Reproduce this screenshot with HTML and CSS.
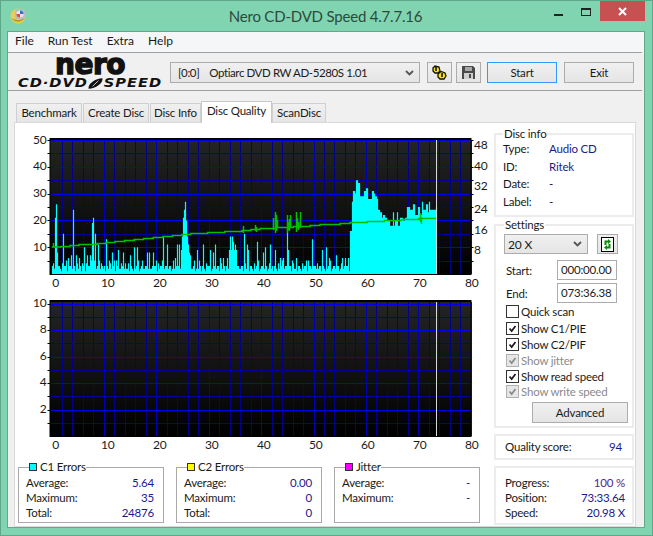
FILE: index.html
```html
<!DOCTYPE html>
<html lang="en">
<head>
    <meta charset="UTF-8">
    <title>Nero CD-DVD Speed 4.7.7.16</title>
    <link rel="stylesheet" href="styles.css">
</head>
<body>
    <svg class="defs" width="0" height="0">
        <symbol id="tick" viewBox="0 0 13 13">
            <path d="M3 6.5 L5.5 9.5 L10 3.5" fill="none" stroke="currentColor" stroke-width="2"/>
        </symbol>
    </svg>

    <div class="titlebar">
        <svg class="app-icon" width="17" height="17" viewBox="0 0 17 17">
            <circle cx="8" cy="9" r="7.5" fill="#e6cf5a"/>
            <path d="M1.5 11 A7.5 7.5 0 0 0 14.5 11 A10 8 0 0 1 1.5 11 Z" fill="#b8982c"/>
            <rect x="5" y="2" width="10" height="10" rx="2" fill="#b9bcc4"/>
            <circle cx="10" cy="7" r="3.6" fill="#e8e8ee"/>
            <path d="M10 3.4 A3.6 3.6 0 0 1 13.6 7 L10 7 Z" fill="#3a6fc0"/>
            <path d="M6.4 7 A3.6 3.6 0 0 0 10 10.6 L10 7 Z" fill="#d8503a"/>
        </svg>
        <div class="title">Nero CD-DVD Speed 4.7.7.16</div>
        <div class="win-btns">
            <span class="win-min"></span>
            <span class="win-max"></span>
            <span class="win-close">
                <svg width="9" height="9" viewBox="0 0 9 9"><path d="M1 1 L8 8 M8 1 L1 8" stroke="#fff" stroke-width="2"/></svg>
            </span>
        </div>
    </div>

    <div class="window">
        <ul class="menu">
            <li>File</li>
            <li>Run Test</li>
            <li>Extra</li>
            <li>Help</li>
        </ul>

        <div class="toolbar">
            <div class="logo">
                <div class="logo-nero">nero</div>
                <div class="logo-sub">
                    <span>CD·DVD</span>
                    <svg width="16" height="15" viewBox="0 0 16 15">
                        <path d="M1 14 C0 8 8 1 15 1 C16 7 8 14 1 14 Z" fill="#111"/>
                        <path d="M5 11 L11 4" stroke="#ddd" stroke-width="1"/>
                    </svg>
                    <span>SPEED</span>
                </div>
            </div>
            <div class="select drive-select">
                <span><span class="drive-id">[0:0]</span>Optiarc DVD RW AD-5280S 1.01</span>
                <svg class="caret" width="9" height="6" viewBox="0 0 9 6"><path d="M1 1 L4.5 4.5 L8 1" fill="none" stroke="#555" stroke-width="1.8"/></svg>
            </div>
            <button class="btn icon-btn eject-btn">
                <svg width="15" height="15" viewBox="0 0 15 15">
                    <g fill="#ffe600" stroke="#111" stroke-width="1.3">
                        <path d="M1 3 L3 1 L7 2 L8 6 L6 8 L3 8 L1 6 Z"/>
                        <path d="M6 9 L9 6.5 L13 8 L14 11 L12 14 L8 14 L6 12 Z"/>
                    </g>
                    <path d="M4 2 V6 M10 8 V12" stroke="#111" stroke-width="1.6"/>
                </svg>
            </button>
            <button class="btn icon-btn save-btn">
                <svg width="13" height="13" viewBox="0 0 13 13">
                    <path d="M0 0 H11 L13 2 V13 H0 Z" fill="#4a4a4a"/>
                    <rect x="3" y="1" width="7" height="4" fill="#a8a8a8"/>
                    <rect x="2" y="7" width="9" height="6" fill="#cfcfcf"/>
                    <rect x="7" y="8" width="2" height="4" fill="#4a4a4a"/>
                </svg>
            </button>
            <button class="btn start-btn">Start</button>
            <button class="btn exit-btn">Exit</button>
        </div>

        <div class="tabs">
            <div class="tab tab-bench">Benchmark</div>
            <div class="tab tab-create">Create Disc</div>
            <div class="tab tab-info">Disc Info</div>
            <div class="tab tab-quality active">Disc Quality</div>
            <div class="tab tab-scan">ScanDisc</div>
        </div>

        <div class="pane">
            <div class="main-col">
                <svg id="chartTop" class="chart chart-top" width="478" height="170"></svg>
                <svg id="chartBottom" class="chart chart-bottom" width="478" height="160"></svg>

                <div class="stats">
                    <fieldset class="group stat-box">
                        <legend><i class="swatch swatch-c1"></i>C1 Errors</legend>
                        <div class="row"><span>Average:</span><b>5.64</b></div>
                        <div class="row"><span>Maximum:</span><b>35</b></div>
                        <div class="row"><span>Total:</span><b>24876</b></div>
                    </fieldset>
                    <fieldset class="group stat-box">
                        <legend><i class="swatch swatch-c2"></i>C2 Errors</legend>
                        <div class="row"><span>Average:</span><b>0.00</b></div>
                        <div class="row"><span>Maximum:</span><b>0</b></div>
                        <div class="row"><span>Total:</span><b>0</b></div>
                    </fieldset>
                    <fieldset class="group stat-box">
                        <legend><i class="swatch swatch-jit"></i>Jitter</legend>
                        <div class="row"><span>Average:</span><b>-</b></div>
                        <div class="row"><span>Maximum:</span><b>-</b></div>
                    </fieldset>
                </div>
            </div>

            <div class="side-col">
                <fieldset class="panel disc-info">
                    <legend>Disc info</legend>
                    <div class="info-row"><span>Type:</span><b>Audio CD</b></div>
                    <div class="info-row"><span>ID:</span><b>Ritek</b></div>
                    <div class="info-row"><span>Date:</span><b class="plain">-</b></div>
                    <div class="info-row"><span>Label:</span><b class="plain">-</b></div>
                </fieldset>

                <fieldset class="panel settings">
                    <legend>Settings</legend>
                    <div class="speed-row">
                        <div class="select speed-select">
                            <span>20 X</span>
                            <svg class="caret" width="9" height="6" viewBox="0 0 9 6"><path d="M1 1 L4.5 4.5 L8 1" fill="none" stroke="#555" stroke-width="1.8"/></svg>
                        </div>
                        <button class="btn refresh-btn">
                            <svg width="13" height="15" viewBox="0 0 13 15">
                                <rect x="0.5" y="0.5" width="12" height="14" fill="#fff" stroke="#000"/>
                                <path d="M7 2 L10 4.5 L7 7 V5.5 H5.5 V8 H3.5 V3.5 H7 Z" fill="#0a8a0a"/>
                                <path d="M6 13 L3 10.5 L6 8 V9.5 H7.5 V7 H9.5 V11.5 H6 Z" fill="#0a8a0a"/>
                            </svg>
                        </button>
                    </div>
                    <div class="time-row"><label>Start:</label><span class="time-input">000:00.00</span></div>
                    <div class="time-row"><label>End:</label><span class="time-input">073:36.38</span></div>
                    <div class="check quick"><i class="box"></i>Quick scan</div>
                    <div class="check"><i class="box"><svg><use href="#tick"/></svg></i>Show C1/PIE</div>
                    <div class="check"><i class="box"><svg><use href="#tick"/></svg></i>Show C2/PIF</div>
                    <div class="check off"><i class="box"><svg><use href="#tick"/></svg></i>Show jitter</div>
                    <div class="check"><i class="box"><svg><use href="#tick"/></svg></i>Show read speed</div>
                    <div class="check off"><i class="box"><svg><use href="#tick"/></svg></i>Show write speed</div>
                    <button class="btn advanced-btn">Advanced</button>
                </fieldset>

                <div class="panel quality">
                    <span>Quality score:</span><b>94</b>
                </div>

                <div class="panel progress">
                    <div class="row"><span>Progress:</span><b class="purple">100 %</b></div>
                    <div class="row"><span>Position:</span><b>73:33.64</b></div>
                    <div class="row"><span>Speed:</span><b>20.98 X</b></div>
                </div>
            </div>
        </div>
    </div>

    <script src="chart.js"></script>
</body>
</html>
```

FILE: styles.css
```css
* {
    box-sizing: border-box;
}
html, body {
    margin: 0;
    padding: 0;
}
body {
    width: 653px;
    height: 536px;
    overflow: hidden;
    background: #80d4b0;
    border: 1px solid #5fa78a;
    font-family: Lato, "Liberation Sans", sans-serif;
    font-size: 11.5px;
    letter-spacing: -0.2px;
    color: #1a1a1a;
}
.defs {
    position: absolute;
}

/* title bar */
.titlebar {
    height: 30px;
    display: flex;
    align-items: flex-start;
    padding-left: 9px;
}
.app-icon {
    margin-top: 6px;
}
.title {
    flex: 1;
    text-align: center;
    font-size: 15px;
    line-height: 30px;
    color: #2c4a40;
    padding-left: 70px;
}
.win-btns {
    display: flex;
    align-items: flex-start;
}
.win-min {
    width: 9px;
    height: 2px;
    background: #222;
    margin: 13px 18px 0 0;
}
.win-max {
    width: 10px;
    height: 8px;
    border: 1px solid #222;
    border-top-width: 2px;
    margin: 7px 9px 0 0;
}
.win-close {
    width: 45px;
    height: 20px;
    background: #c75050;
    display: flex;
    align-items: center;
    justify-content: center;
    margin-right: 7px;
}

/* window body */
.window {
    margin-left: 6px;
    width: 638px;
    height: 497px;
    background: #f0f0f0;
    border: 1px solid #64a88c;
}
.menu {
    list-style: none;
    margin: 0;
    padding: 0 0 0 7px;
    height: 20px;
    background: #f5f6f7;
    display: flex;
    gap: 14px;
    line-height: 18px;
    font-size: 12px;
    letter-spacing: 0;
}
.toolbar {
    height: 39px;
    display: flex;
    align-items: center;
    border-top: 1px solid #a0a0a0;
    border-bottom: 1px solid #a0a0a0;
    margin: 0 2px 0 0;
    padding: 2px 0 0 10px;
}
.logo {
    width: 144px;
    color: #111;
    text-align: center;
    align-self: flex-start;
}
.logo-nero {
    font-family: "DejaVu Sans", sans-serif;
    font-weight: bold;
    font-size: 28px;
    line-height: 19px;
    height: 21px;
    letter-spacing: -0.5px;
    -webkit-text-stroke: 1.4px #111;
}
.logo-sub {
    display: flex;
    align-items: center;
    justify-content: center;
    height: 14px;
    font-family: "DejaVu Sans", sans-serif;
    font-weight: bold;
    font-style: italic;
    font-size: 12px;
    letter-spacing: 0.8px;
    transform: scaleX(1.22);
}
.logo-sub svg {
    width: 13px;
}
.select {
    height: 21px;
    border: 1px solid #acacac;
    background: linear-gradient(#f0f0f0, #e5e5e5);
    display: flex;
    align-items: center;
    justify-content: space-between;
    padding: 0 5px 0 7px;
}
.drive-select {
    width: 250px;
    margin-left: 8px;
    font-size: 11.5px;
    letter-spacing: -0.4px;
}
.drive-id {
    margin-right: 10px;
}
.btn {
    font: inherit;
    letter-spacing: inherit;
    color: inherit;
    border: 1px solid #acacac;
    background: linear-gradient(#f0f0f0, #e5e5e5);
    padding: 0;
    height: 21px;
    display: flex;
    align-items: center;
    justify-content: center;
}
.icon-btn {
    width: 25px;
}
.eject-btn {
    margin-left: 7px;
}
.save-btn {
    margin-left: 4px;
}
.start-btn {
    width: 70px;
    margin-left: 6px;
    border-color: #3399ff;
}
.exit-btn {
    width: 70px;
    margin-left: 7px;
}

/* tabs */
.tabs {
    display: flex;
    height: 31px;
    padding: 9px 0 0 8px;
    align-items: flex-end;
    position: relative;
    z-index: 1;
}
.tab {
    height: 19px;
    line-height: 18px;
    text-align: center;
    border: 1px solid #d0d0d0;
    border-bottom: none;
    background: linear-gradient(#f0f0f0, #e5e5e5);
    margin-right: 1px;
}
.tab-bench { width: 66px; }
.tab-create { width: 66px; }
.tab-info { width: 51px; }
.tab-quality { width: 71px; }
.tab-scan { width: 54px; }
.tab.active {
    height: 22px;
    line-height: 17px;
    background: #fff;
    margin: 0 0 -1px -1px;
    border-color: #c8c8c8;
}

/* main pane */
.pane {
    margin-left: 6px;
    width: 622px;
    height: 405px;
    background: #fff;
    border: 1px solid #d9d9d9;
    display: flex;
}
.main-col {
    width: 479px;
}
.chart {
    display: block;
}
.chart text {
    font-size: 12px;
    fill: #1a1a1a;
}
.stats {
    display: flex;
    gap: 12px;
    padding-left: 3px;
    margin-top: 7px;
}
.group, .panel {
    margin: 0;
    min-width: 0;
}
.stat-box {
    width: 146px;
    height: 63px;
    border: 1px solid #a9a9a9;
    padding: 1px 3px 0 7px;
    line-height: 15px;
}
.stat-box legend {
    padding: 0;
    margin-left: 3px;
    display: flex;
    align-items: center;
    line-height: 14px;
}
.swatch {
    width: 8px;
    height: 8px;
    border: 1px solid #333;
    margin-right: 3px;
}
.swatch-c1 { background: #00ffff; }
.swatch-c2 { background: #ffff00; }
.swatch-jit { background: #ff00ff; }
.row {
    display: flex;
    justify-content: space-between;
}
.row b, .info-row b, .quality b {
    font-weight: normal;
    color: #1a1a90;
}
.info-row b.plain {
    color: #1a1a1a;
}
.row b {
    padding-right: 6px;
}

/* side column */
.side-col {
    width: 140px;
    margin-top: 3px;
}
.panel {
    border: 2px solid #ececec;
    width: 140px;
}
.disc-info {
    height: 91px;
    padding: 0 0 0 7px;
}
.disc-info legend, .settings legend {
    padding: 0 1px;
    line-height: 15px;
}
.info-row {
    display: flex;
    height: 17.6px;
    line-height: 16px;
}
.info-row span {
    width: 46px;
}
.settings {
    height: 211px;
    padding: 2px 0 0 8px;
}
.speed-row {
    display: flex;
    gap: 9px;
}
.speed-select {
    width: 84px;
    height: 20px;
    padding-left: 3px;
    font-size: 12px;
}
.refresh-btn {
    width: 21px;
    height: 20px;
}
.time-row {
    display: flex;
    align-items: center;
    justify-content: space-between;
    padding: 0 15px 0 2px;
    margin-top: 3px;
}
.speed-row + .time-row {
    margin-top: 6px;
}
.time-input {
    width: 60px;
    height: 20px;
    border: 1px solid #acacac;
    padding-left: 3px;
    line-height: 18px;
}
.check {
    display: flex;
    align-items: center;
    height: 15.8px;
    padding-left: 2px;
}
.check.quick {
    margin-top: 1px;
    margin-bottom: 1px;
}
.check.off {
    color: #8a8a8a;
}
.box {
    width: 13px;
    height: 13px;
    border: 1px solid #333;
    margin-right: 2px;
    display: block;
    flex: none;
}
.box svg {
    display: block;
    width: 11px;
    height: 11px;
}
.off .box {
    border-color: #b0b0b0;
    background: #e6e6e6;
}
.advanced-btn {
    width: 96px;
    margin: 2px 0 0 28px;
}
.quality {
    display: flex;
    justify-content: space-between;
    height: 26px;
    margin-top: 6px;
    padding: 0 10px 0 9px;
    line-height: 22px;
}
.progress {
    height: 59px;
    margin-top: 6px;
    padding: 7px 7px 0 9px;
    line-height: 15.2px;
}
.progress .row b {
    padding-right: 0;
}
.purple {
    color: #5a1a90 !important;
}
```

FILE: chart.js
```js
// draws the two disc quality graphs into their svg elements
const NS = "http://www.w3.org/2000/svg";
const OFF_X = 15; // svg left edge in window pixels
const OFF_Y = 123;
const X0 = 51.5;
const X_SCALE = 5.24;

function add(svg, name, attrs, text) {
    let el = document.createElementNS(NS, name);
    for (let key in attrs) el.setAttribute(key, attrs[key]);
    if (text !== undefined) el.textContent = text;
    svg.appendChild(el);
    return el;
}

function drawFrame(svg, top, bottom, yLines, yLabels, gradId) {
    let defs = add(svg, "defs", {});
    let grad = add(defs, "linearGradient", { id: gradId, x1: 0, y1: 0, x2: 0, y2: 1 });
    add(grad, "stop", { offset: "0", "stop-color": "#242424" });
    add(grad, "stop", { offset: "1", "stop-color": "#000" });

    let left = X0 - OFF_X;
    add(svg, "rect", { x: left - 2, y: top - 2, width: 422, height: bottom - top + 3, fill: "#000" });
    add(svg, "rect", { x: left - 1, y: top, width: 420, height: bottom - top, fill: "url(#" + gradId + ")" });

    // vertical grid every 2 units
    for (let u = 2; u <= 80; u += 2) {
        let x = Math.round(left + u * X_SCALE) + 0.5;
        add(svg, "line", { x1: x, x2: x, y1: top, y2: bottom, stroke: u % 10 == 0 ? "#0000b4" : "#000088" });
    }
    // horizontal grid, with small ticks on the left
    yLines.forEach(line => {
        let y = Math.round(line.y) + 0.5;
        add(svg, "line", { x1: left - 1, x2: left + 419, y1: y, y2: y, stroke: line.major ? "#0000f0" : "#00009c" });
        add(svg, "line", { x1: left - 4, x2: left - 1, y1: y, y2: y, stroke: "#000" });
    });
    yLabels.forEach(l => add(svg, "text", { x: left - 5, y: l.y + 3, "text-anchor": "end" }, l.text));
    for (let u = 0; u <= 80; u += 10) {
        add(svg, "text", { x: 40.7 + u * 5.2, y: bottom + 13, "text-anchor": "middle" }, u);
    }
}

// C1 spikes as [window x, value]
const spikes = [[52,3],[55,21],[56,26],[57,8],[58,3],[59,3],[63,15],[66,5],[68,6],[71,7],[73,24],[76,7],[79,6],[82,4],[84,10],[87,7],[90,7],[91,5],[92,19],[93,21],[94,5],[95,15],[98,11],[99,5],[102,3],[106,13],[109,5],[112,8],[114,5],[116,5],[118,9],[121,4],[123,8],[128,4],[130,7],[134,10],[137,10],[142,5],[147,8],[149,8],[153,8],[156,5],[160,3],[163,14],[167,11],[170,3],[173,5],[175,6],[177,11],[179,11],[181,9],[182,14],[183,21],[184,24],[185,27],[186,20],[187,14],[188,11],[189,8],[190,7],[194,5],[197,9],[199,5],[203,11],[207,3],[210,9],[213,8],[215,11],[220,6],[223,6],[227,6],[229,9],[230,14],[231,9],[232,14],[233,12],[234,9],[235,11],[236,9],[244,15],[247,11],[248,9],[257,12],[263,8],[265,10],[270,11],[275,9],[280,6],[283,6],[287,17],[288,9],[292,5],[296,6],[298,3],[308,5],[312,13],[315,3],[319,3],[322,9],[326,10],[329,6],[333,3],[336,7],[342,6],[345,6],[348,6]];

// the dense end of the disc, each value holds until the next x
const block = [[350,16],[352,27],[353,31],[355,30],[356,35],[358,34],[360,29],[362,29],[364,31],[366,32],[368,28],[372,31],[374,30],[375,29],[377,28],[378,24],[380,23],[382,21],[383,22],[385,21],[387,20],[390,18],[393,23],[394,18],[395,20],[397,23],[398,18],[400,21],[403,20],[405,21],[407,25],[410,24],[413,26],[415,22],[418,25],[420,22],[422,27],[423,24],[426,26],[428,23],[429,27],[430,24],[436,25]];

const baseNoise = [2,3,3,1,2,4,2,2,3,1,3,3,2,1,4,2,3,3,5,1,2,3,3,2];

function c1Heights() {
    let values = {};
    for (let x = 52; x < 350; x++) values[x] = baseNoise[x % baseNoise.length];
    spikes.forEach(s => values[s[0]] = s[1]);
    let cur = 0;
    let b = 0;
    for (let x = 350; x <= 436; x++) {
        if (b < block.length && block[b][0] <= x) cur = block[b++][1];
        values[x] = cur;
    }
    return values;
}

function drawTop() {
    let svg = document.getElementById("chartTop");
    let top = 17, bottom = 151;
    let perUnit = (bottom - top) / 50;
    let lines = [];
    for (let v = 5; v <= 50; v += 5) lines.push({ y: bottom - v * perUnit, major: v % 10 == 0 });
    let labels = [10, 20, 30, 40, 50].map(v => ({ y: bottom - v * perUnit + 0.5, text: v }));
    drawFrame(svg, top, bottom, lines, labels, "bgTop");

    // C1 bars
    let values = c1Heights();
    let d = "";
    for (let x in values) {
        let h = values[x] * perUnit;
        d += "M" + (x - OFF_X + 0.5) + " " + bottom + "V" + (bottom - h);
    }
    add(svg, "path", { d: d, stroke: "#00ffff", fill: "none", "stroke-width": 1.2 });

    // read speed line
    let pts = [[52,247],[115,241],[182,234],[242,230],[260,228],[310,225],[350,222],[393,220],[436,217]];
    let speed = "M" + (pts[0][0] - OFF_X) + " " + (pts[0][1] - OFF_Y);
    for (let i = 1; i < pts.length; i++) {
        let stepsN = Math.round((pts[i][0] - pts[i - 1][0]) / 9);
        for (let s = 1; s <= stepsN; s++) {
            let x = pts[i - 1][0] + (pts[i][0] - pts[i - 1][0]) * s / stepsN;
            let y = pts[i - 1][1] + (pts[i][1] - pts[i - 1][1]) * s / stepsN;
            speed += "H" + (x - OFF_X) + "V" + (Math.round(y) - OFF_Y + 0.5);
        }
    }
    // jitter in the read speed
    [[53,243,247],[243,226,233],[255,225,231],[256,227,232],[273,218,230],[275,212,233],[276,215,231],[277,220,228],[287,215,233],[288,222,230],[289,219,231],[290,215,227],[296,212,232],[297,218,228],[298,222,230],[300,212,228],[420,213,222],[421,217,224]].forEach(j => {
        speed += "M" + (j[0] - OFF_X + 0.5) + " " + (j[1] - OFF_Y) + "V" + (j[2] - OFF_Y);
    });
    add(svg, "path", { d: speed, stroke: "#00c000", "stroke-width": 1.5, fill: "none" });

    // current position marker
    add(svg, "line", { x1: 421.5, x2: 421.5, y1: top, y2: bottom, stroke: "#d8d8d8" });

    // right hand scale
    let left = X0 - OFF_X;
    lines.forEach(l => add(svg, "line", { x1: left + 419, x2: left + 422, y1: Math.round(l.y) + 0.5, y2: Math.round(l.y) + 0.5, stroke: "#000" }));
    [[48,22],[40,43],[32,63],[24,86],[16,107],[8,127]].forEach(l => {
        add(svg, "text", { x: 459, y: l[1] + 4 }, l[0]);
    });
}

function drawBottom() {
    let svg = document.getElementById("chartBottom");
    let top = 9, bottom = 143;
    let perUnit = 13.25;
    let lines = [];
    for (let v = 1; v <= 10; v++) lines.push({ y: bottom - v * perUnit, major: v % 2 == 0 });
    let labels = [2, 4, 6, 8, 10].map(v => ({ y: bottom - v * perUnit, text: v }));
    drawFrame(svg, top, bottom, lines, labels, "bgBottom");
    add(svg, "line", { x1: 421.5, x2: 421.5, y1: top, y2: bottom, stroke: "#d8d8d8" });
}

drawTop();
drawBottom();
```
